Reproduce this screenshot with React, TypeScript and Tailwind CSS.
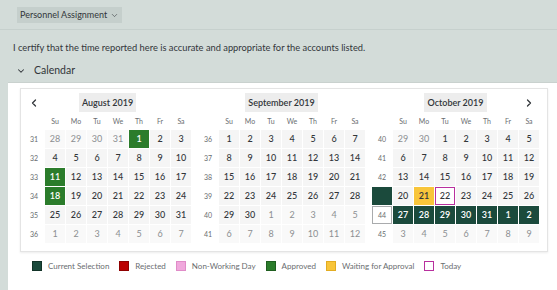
import { ChevronDown, ChevronLeft, ChevronRight } from 'lucide-react';

type Status = 'approved' | 'selected' | 'waiting' | 'today';

interface DayCell {
  n: number;
  out: boolean;
  status?: Status;
}

interface WeekRow {
  wk: number;
  days: DayCell[];
}

const statuses: Record<string, Status> = {
  '7-1': 'approved',
  '7-11': 'approved',
  '7-18': 'approved',
  '9-21': 'waiting',
  '9-22': 'today',
  '9-27': 'selected',
  '9-28': 'selected',
  '9-29': 'selected',
  '9-30': 'selected',
  '9-31': 'selected',
  '10-1': 'selected',
  '10-2': 'selected',
};

// 6 rows starting from the Sunday on or before the 1st
function buildWeeks(year: number, month: number, firstWeek: number): WeekRow[] {
  const first = new Date(year, month, 1);
  const start = new Date(year, month, 1 - first.getDay());
  const rows: WeekRow[] = [];
  for (let r = 0; r < 6; r++) {
    const days: DayCell[] = [];
    for (let c = 0; c < 7; c++) {
      const d = new Date(start.getFullYear(), start.getMonth(), start.getDate() + r * 7 + c);
      days.push({
        n: d.getDate(),
        out: d.getMonth() !== month,
        status: statuses[`${d.getMonth()}-${d.getDate()}`],
      });
    }
    rows.push({ wk: firstWeek + r, days });
  }
  return rows;
}

const dayNames = ['Su', 'Mo', 'Tu', 'We', 'Th', 'Fr', 'Sa'];

function dayClass(day: DayCell) {
  switch (day.status) {
    case 'approved':
      return 'bg-[#2b7c2b] text-white font-semibold';
    case 'selected':
      return 'bg-[#1b4a3c] text-white font-semibold';
    case 'waiting':
      return 'bg-[#f8c53a] text-[#32363a] font-semibold';
    case 'today':
      return 'bg-white border border-[#b8309e] text-[#32363a] font-medium';
    default:
      return day.out
        ? 'bg-[#f9f9f9] text-[#8c8f92]'
        : 'bg-[#f5f5f5] text-[#32363a] font-medium';
  }
}

function Month({
  title,
  titleWidth,
  rows,
  prev,
  next,
  selectedWeek,
  outlinedWeek,
}: {
  title: string;
  titleWidth: string;
  rows: WeekRow[];
  prev?: boolean;
  next?: boolean;
  selectedWeek?: number;
  outlinedWeek?: number;
}) {
  return (
    <div className="w-[167px]">
      {/* Header */}
      <div className="grid grid-cols-[20px_1fr_20px] items-center h-[19px]">
        <div className="flex justify-center text-[#32363a]">
          {prev && <ChevronLeft size={12} strokeWidth={2.5} />}
        </div>
        <div className="flex justify-center">
          <span
            className={`${titleWidth} h-[19px] flex items-center justify-center bg-[#ededed] text-[9px] font-semibold text-[#32363a]`}
          >
            {title}
          </span>
        </div>
        <div className="flex justify-center text-[#32363a]">
          {next && <ChevronRight size={12} strokeWidth={2.5} />}
        </div>
      </div>

      {/* Day names */}
      <div className="grid grid-cols-[repeat(8,20px)] gap-x-px h-[18px] items-center">
        <span />
        {dayNames.map((d) => (
          <span key={d} className="text-center text-[7px] text-[#6a6d70]">
            {d}
          </span>
        ))}
      </div>

      {/* Weeks */}
      <div className="flex flex-col gap-px">
        {rows.map((row) => (
          <div key={row.wk} className="grid grid-cols-[repeat(8,20px)] gap-x-px h-[18px]">
            {row.wk === selectedWeek ? (
              <span className="bg-[#1b4a3c]" />
            ) : row.wk === outlinedWeek ? (
              <span className="flex items-center justify-center border border-[#a9abad] bg-white text-[7px] text-[#6a6d70]">
                {row.wk}
              </span>
            ) : (
              <span className="flex items-center justify-center text-[7px] text-[#6a6d70]">
                {row.wk}
              </span>
            )}
            {row.days.map((day, i) => (
              <span
                key={i}
                className={`flex items-center justify-center text-[9px] ${dayClass(day)}`}
              >
                {day.n}
              </span>
            ))}
          </div>
        ))}
      </div>
    </div>
  );
}

const legend = [
  { label: 'Current Selection', box: 'bg-[#1b4a3c] border-[#123328]' },
  { label: 'Rejected', box: 'bg-[#bb0000] border-[#8f0000]' },
  { label: 'Non-Working Day', box: 'bg-[#f0a8dc] border-[#e08cc8]' },
  { label: 'Approved', box: 'bg-[#2b7c2b] border-[#1f5e1f]' },
  { label: 'Waiting for Approval', box: 'bg-[#f8c53a] border-[#e2ac22]' },
  { label: 'Today', box: 'bg-white border-[#b8309e]' },
];

export default function App() {
  return (
    <div className="w-[557px] h-[290px] overflow-hidden bg-[#d3dcd9] font-['Lato','Liberation_Sans',sans-serif] text-[#32363a]">
      {/* Top bar */}
      <div className="h-[30px] border-b border-[#c6d0cd] pl-[17px] pt-[7px]">
        <button className="h-[16px] px-[3px] flex items-center gap-[3px] bg-[#c5cfcc] text-[9px] text-[#32363a]">
          Personnel Assignment
          <ChevronDown size={9} strokeWidth={1.5} />
        </button>
      </div>

      {/* Certification */}
      <p className="h-[31px] pl-[13px] pt-[12px] text-[9.3px] leading-[12px] text-[#32363a]">
        I certify that the time reported here is accurate and appropriate for the accounts listed.
      </p>

      {/* Calendar header */}
      <div className="h-[21px] flex items-center gap-[8px] pl-[16px] pb-[2px]">
        <ChevronDown size={10} strokeWidth={2.5} />
        <span className="text-[10.5px]">Calendar</span>
      </div>

      {/* Calendar panel */}
      <div className="ml-[8px] h-[208px] bg-white border-t border-[#c9d1ce] pl-[12px] pt-[5px]">
        <div className="w-[528px] h-[164px] border border-[#e4e4e4] shadow-[0_1px_2px_rgba(0,0,0,0.08)] pl-[3px] pt-[4px] flex gap-[7px]">
          <Month
            title="August 2019"
            titleWidth="w-[57px]"
            rows={buildWeeks(2019, 7, 31)}
            prev
          />
          <Month title="September 2019" titleWidth="w-[73px]" rows={buildWeeks(2019, 8, 36)} />
          <Month
            title="October 2019"
            titleWidth="w-[63px]"
            rows={buildWeeks(2019, 9, 40)}
            next
            selectedWeek={43}
            outlinedWeek={44}
          />
        </div>

        {/* Legend */}
        <div className="flex items-center pl-[12px] mt-[8px] h-[12px]">
          {legend.map((item) => (
            <div key={item.label} className="flex items-center mr-[10px]">
              <span className={`w-[10px] h-[10px] border ${item.box}`} />
              <span className="ml-[6px] text-[8px] text-[#6a6d70]">{item.label}</span>
            </div>
          ))}
        </div>
      </div>
    </div>
  );
}
